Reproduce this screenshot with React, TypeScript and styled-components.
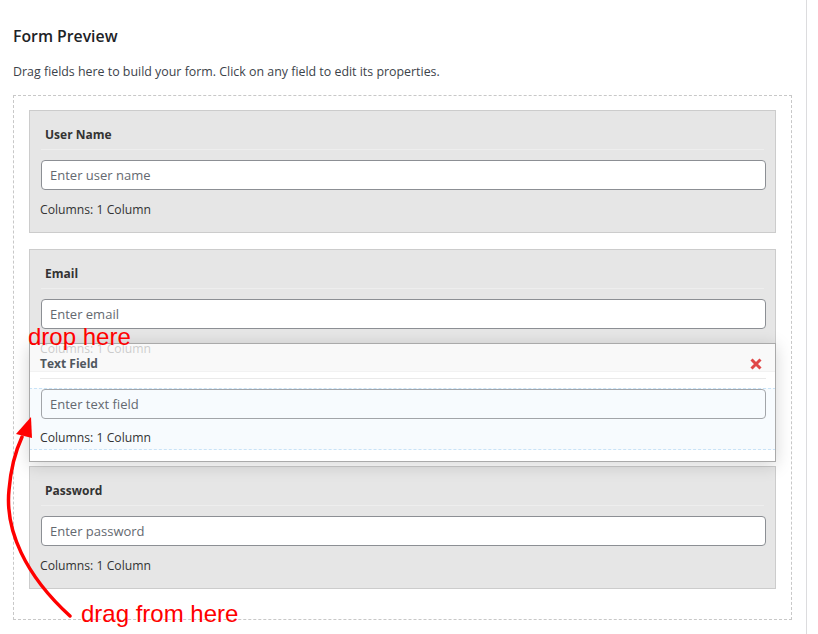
import React from "react";
import styled, { createGlobalStyle } from "styled-components";

const GlobalStyle = createGlobalStyle`
  html, body { margin: 0; padding: 0; background: #ffffff; }
  body { font-family: "Open Sans", "Noto Sans", sans-serif; color: #3c434a; }
  * { box-sizing: border-box; }
`;

const Page = styled.div`
  position: relative;
  width: 807px;
  min-height: 634px;
  padding: 25px 14px 14px 13px;
  border-right: 1px solid #dcdcde;
`;

const Title = styled.h2`
  margin: 0;
  font-size: 15.8px;
  line-height: 22px;
  font-weight: 600;
  color: #1d2327;
`;

const Description = styled.p`
  margin: 16px 0 14px;
  font-size: 12.4px;
  line-height: 18px;
  color: #3c434a;
`;

const DropZone = styled.div`
  border: 1px dashed #c8c8c8;
  padding: 14px 15px 30px;
  display: flex;
  flex-direction: column;
  gap: 16px;
`;

const Card = styled.div`
  background: #e6e6e6;
  border: 1px solid #cccccc;
  padding: 10px 9px 13px 11px;
  display: flex;
  flex-direction: column;
`;

const CardHeader = styled.div`
  padding: 5px 4px;
  margin-right: 2px;
  border-bottom: 1px solid #eeeeee;
  display: flex;
  align-items: center;
  justify-content: space-between;
`;

const Label = styled.span<{ $muted?: boolean }>`
  font-size: 12px;
  line-height: 18px;
  font-weight: 700;
  color: ${(p) => (p.$muted ? "#50575e" : "#333333")};
`;

const Input = styled.input<{ $ghost?: boolean }>`
  margin-top: 10px;
  height: 30px;
  width: 100%;
  padding: 0 8px;
  border: 1px solid ${(p) => (p.$ghost ? "#a2a5a9" : "#8c8f94")};
  border-radius: 4px;
  background: ${(p) => (p.$ghost ? "transparent" : "#ffffff")};
  font-family: inherit;
  font-size: 13px;
  color: #2c3338;
  outline: none;
  &::placeholder { color: #646970; opacity: 1; }
`;

const Columns = styled.div`
  margin-top: 11px;
  margin-left: -1px;
  font-size: 12.2px;
  line-height: 18px;
  color: #333333;
`;

const Placeholder = styled.div`
  height: 62px;
  border: 1px dashed #2a8fdd;
  background: #e0f0fc;
`;

const Helper = styled.div`
  position: absolute;
  left: 29px;
  top: 343px;
  width: 747px;
  border: 1px solid #aaaaaa;
  background: rgba(255, 255, 255, 0.75);
  box-shadow: 0 3px 16px rgba(0, 0, 0, 0.17);
  padding: 0 9px 14px 11px;
  display: flex;
  flex-direction: column;
`;

const HelperHeader = styled.div`
  padding: 11px 0 5px;
  margin-left: -1px;
  border-bottom: 1px solid #eaeaea;
  display: flex;
  align-items: center;
  justify-content: space-between;
`;

const HelperInput = styled(Input)`
  margin-top: 10px;
`;

const HelperColumns = styled(Columns)`
  margin-top: 10px;
`;

const RemoveButton = styled.button`
  border: 0;
  background: none;
  padding: 0;
  margin-right: 3px;
  width: 14px;
  height: 14px;
  display: flex;
  align-items: center;
  justify-content: center;
  cursor: pointer;
`;

const Annotation = styled.span<{ $left: number; $top: number }>`
  position: absolute;
  left: ${(p) => p.$left}px;
  top: ${(p) => p.$top}px;
  font-family: "Liberation Sans", Arial, sans-serif;
  font-size: 24px;
  line-height: 24px;
  color: #ff0000;
  white-space: nowrap;
  pointer-events: none;
`;

const ArrowLayer = styled.svg`
  position: absolute;
  left: 0;
  top: 0;
  pointer-events: none;
`;

type Field = { label: string; placeholder: string };

const FieldCard = ({ label, placeholder }: Field) => (
  <Card>
    <CardHeader>
      <Label>{label}</Label>
    </CardHeader>
    <Input placeholder={placeholder} readOnly />
    <Columns>Columns: 1 Column</Columns>
  </Card>
);

export default function App() {
  return (
    <>
      <GlobalStyle />
      <Page>
        <Title>Form Preview</Title>
        <Description>
          Drag fields here to build your form. Click on any field to edit its properties.
        </Description>
        <DropZone>
          <FieldCard label="User Name" placeholder="Enter user name" />
          <FieldCard label="Email" placeholder="Enter email" />
          <Placeholder />
          <FieldCard label="Password" placeholder="Enter password" />
        </DropZone>

        <Helper>
          <HelperHeader>
            <Label $muted>Text Field</Label>
            <RemoveButton aria-label="Remove field">
              <svg width="12" height="12" viewBox="0 0 12 12">
                <path
                  d="M1.5 1.5 L10.5 10.5 M10.5 1.5 L1.5 10.5"
                  stroke="#e04848"
                  strokeWidth="3"
                  strokeLinecap="butt"
                />
              </svg>
            </RemoveButton>
          </HelperHeader>
          <HelperInput $ghost placeholder="Enter text field" readOnly />
          <HelperColumns>Columns: 1 Column</HelperColumns>
        </Helper>

        <Annotation $left={28} $top={325}>drop here</Annotation>
        <Annotation $left={81} $top={602}>drag from here</Annotation>
        <ArrowLayer width="120" height="634" viewBox="0 0 120 634">
          <path
            d="M70 616 C 25 575, 5 530, 9 490 C 11 466, 15 452, 22 437"
            fill="none"
            stroke="#ff0000"
            strokeWidth="3.5"
            strokeLinecap="round"
          />
          <polygon points="31,417 16,434 32,438" fill="#ff0000" />
        </ArrowLayer>
      </Page>
    </>
  );
}
